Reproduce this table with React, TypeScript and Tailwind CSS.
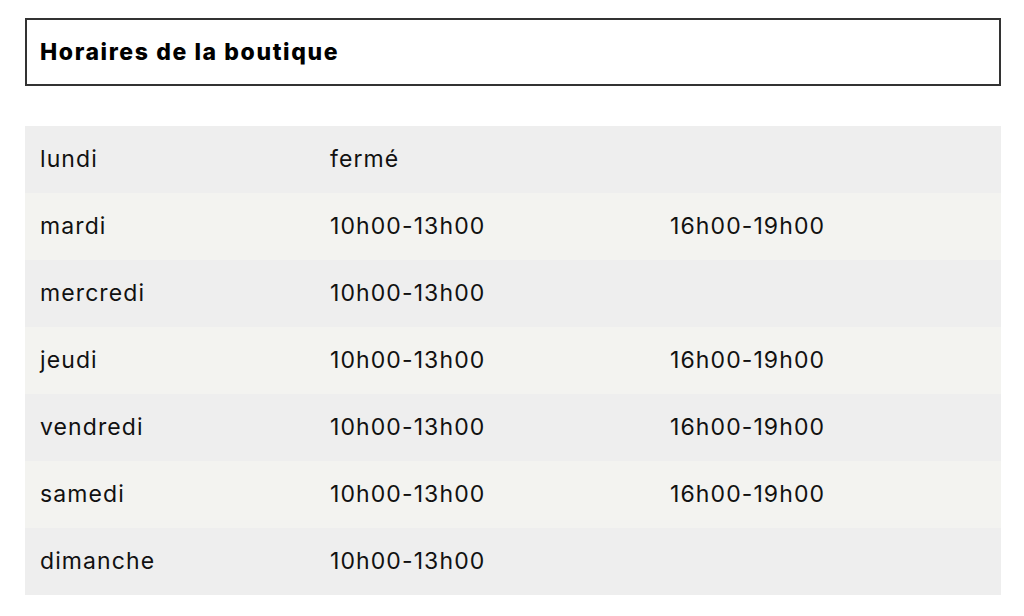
import React from "react";

const hours = [
  { day: "lundi", am: "fermé", pm: "" },
  { day: "mardi", am: "10h00-13h00", pm: "16h00-19h00" },
  { day: "mercredi", am: "10h00-13h00", pm: "" },
  { day: "jeudi", am: "10h00-13h00", pm: "16h00-19h00" },
  { day: "vendredi", am: "10h00-13h00", pm: "16h00-19h00" },
  { day: "samedi", am: "10h00-13h00", pm: "16h00-19h00" },
  { day: "dimanche", am: "10h00-13h00", pm: "" },
];

export default function App() {
  return (
    <div className="w-[1024px] h-[616px] bg-white pl-[25px] pr-[23px] pt-[18px] text-[#111]" style={{ fontFamily: "Inter, 'Liberation Sans', sans-serif" }}>
      {/* header */}
      <div className="h-[68px] border-2 border-[#333] flex items-center px-[13px]">
        <h1 className="text-[23px] font-extrabold tracking-[1.6px] text-black">Horaires de la boutique</h1>
      </div>

      {/* table */}
      <div className="mt-[40px] w-full">
        {hours.map((h, i) => (
          <div
            key={h.day}
            className={`grid grid-cols-[290px_340px_1fr] h-[67px] items-center text-[23px] tracking-[1.1px] ${i % 2 === 0 ? "bg-[#eeeeee]" : "bg-[#f3f3f0]"}`}
          >
            <div className="pl-[15px]">{h.day}</div>
            <div className="pl-[15px]">{h.am}</div>
            <div className="pl-[15px]">{h.pm}</div>
          </div>
        ))}
      </div>
    </div>
  );
}
